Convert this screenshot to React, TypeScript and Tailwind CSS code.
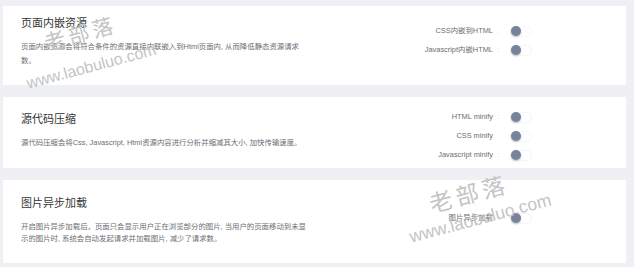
type Row = { label: string };

type Section = {
  title: string;
  desc: string;
  height: string;
  titleTop: string;
  descGap: string;
  leading: string;
  rowsTop: string;
  rows: Row[];
};

const SECTIONS: Section[] = [
  {
    title: "页面内嵌资源",
    desc: "页面内嵌资源会将符合条件的资源直接内联嵌入到Html页面内, 从而降低静态资源请求数。",
    height: "h-[79px]",
    titleTop: "pt-[9px]",
    descGap: "mt-[9px]",
    leading: "leading-[14px]",
    rowsTop: "pt-[15.5px]",
    rows: [{ label: "CSS内嵌到HTML" }, { label: "Javascript内嵌HTML" }],
  },
  {
    title: "源代码压缩",
    desc: "源代码压缩会将Css, Javascript, Html资源内容进行分析并缩减其大小, 加快传输速度。",
    height: "h-[71px]",
    titleTop: "pt-[14px]",
    descGap: "mt-[9px]",
    leading: "leading-[14px]",
    rowsTop: "pt-[10.5px]",
    rows: [{ label: "HTML minify" }, { label: "CSS minify" }, { label: "Javascript minify" }],
  },
  {
    title: "图片异步加载",
    desc: "开启图片异步加载后，页面只会显示用户正在浏览部分的图片, 当用户的页面移动到未显示的图片时, 系统会自动发起请求并加载图片, 减少了请求数。",
    height: "h-[83px]",
    titleTop: "pt-[15px]",
    descGap: "mt-[10px]",
    leading: "leading-[12px]",
    rowsTop: "pt-[28.5px]",
    rows: [{ label: "图片异步加载" }],
  },
];

function Toggle() {
  return (
    <span className="relative flex h-[9px] w-[20px] items-center rounded-full bg-white shadow-[0_0_2px_rgba(0,0,0,0.12)]">
      <span className="absolute left-0 h-[10px] w-[10px] rounded-full bg-[#77839a] shadow-[0_1px_2px_rgba(0,0,0,0.25)]" />
    </span>
  );
}

function Card({ s }: { s: Section }) {
  return (
    <div className={`flex bg-white pl-[18px] pr-[95px] ${s.height}`}>
      <div className={`w-[286px] ${s.titleTop}`}>
        <h3 className="text-[11px] leading-[16px] text-[#353535]">{s.title}</h3>
        <p className={`text-[7.4px] text-[#6b6e73] ${s.descGap} ${s.leading}`}>{s.desc}</p>
      </div>
      <div className={`ml-auto flex flex-col ${s.rowsTop}`}>
        {s.rows.map((r) => (
          <div key={r.label} className="flex h-[19px] items-center justify-end">
            <span className="text-[7.4px] text-[#6b6e73]">{r.label}</span>
            <span className="ml-[4px] mr-[12px] text-[7.4px] text-[#d4d6da]">:</span>
            <Toggle />
          </div>
        ))}
      </div>
    </div>
  );
}

export default function App() {
  return (
    <div
      className="relative h-[267px] w-[634px] overflow-hidden bg-[#eff0f4] pl-[3px] pr-[8px] pt-[6px]"
      style={{ fontFamily: '"Liberation Sans", "Noto Sans CJK SC", sans-serif' }}
    >
      <div className="flex flex-col gap-[12px]">
        {SECTIONS.map((s) => (
          <Card key={s.title} s={s} />
        ))}
      </div>

      {/* watermarks */}
      <span className="pointer-events-none absolute left-[45px] top-[34px] origin-left -rotate-15 whitespace-nowrap text-[21px] leading-[20px] tracking-[3.5px] text-[#c4c4c4]">
        老部落
      </span>
      <span className="pointer-events-none absolute left-[27px] top-[76px] origin-left -rotate-15 whitespace-nowrap text-[16px] leading-[16px] text-[#c4c4c4]">
        www.laobuluo.com
      </span>
      <span className="pointer-events-none absolute left-[430px] top-[194px] origin-left -rotate-15 whitespace-nowrap text-[23px] leading-[22px] tracking-[4px] text-[#c4c4c4]">
        老部落
      </span>
      <span className="pointer-events-none absolute left-[410px] top-[229px] origin-left -rotate-15 whitespace-nowrap text-[17.5px] leading-[17.5px] text-[#c4c4c4]">
        www.laobuluo.com
      </span>
    </div>
  );
}
